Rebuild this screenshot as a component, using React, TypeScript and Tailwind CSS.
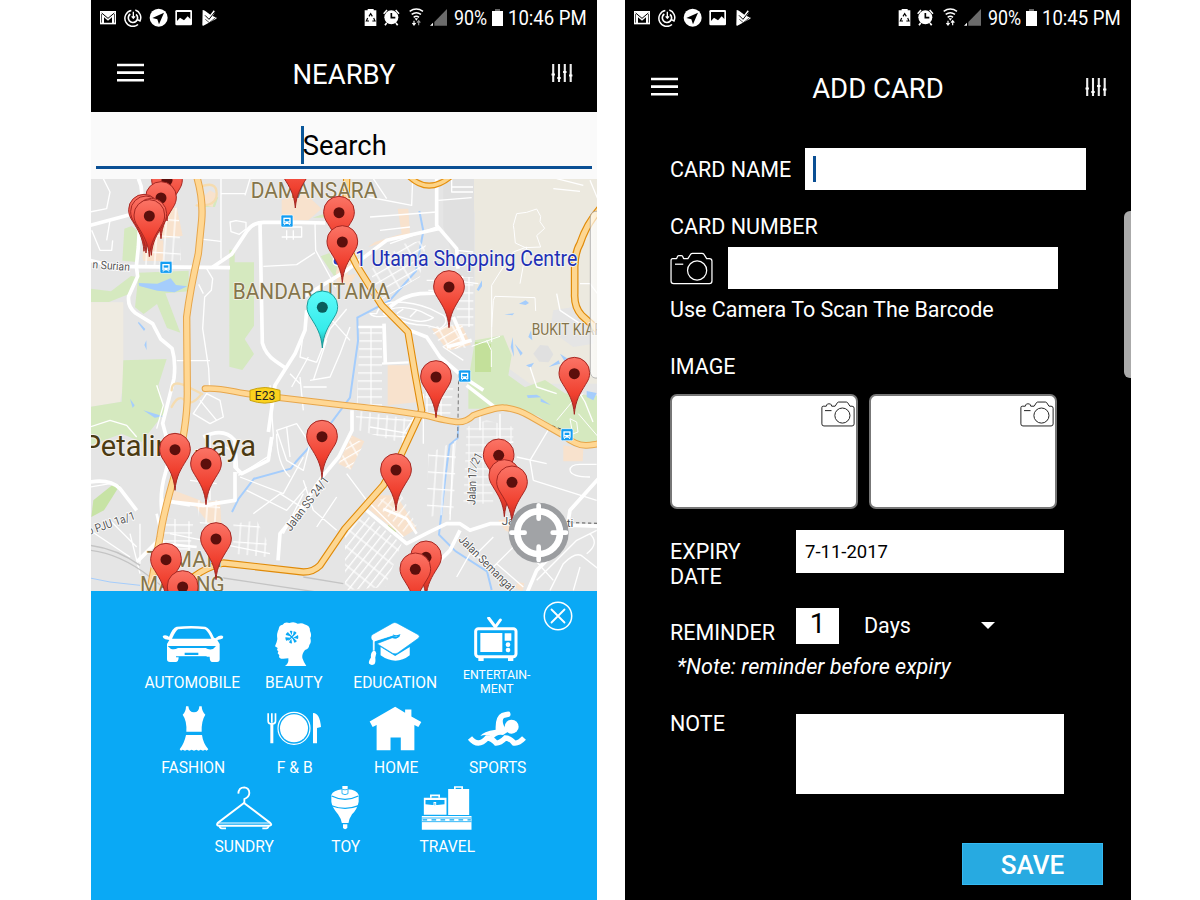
import React from "react";

/* ---------- status bar ---------- */

function NotificationIcons() {
  return (
    <svg viewBox="27 22 357 57" width="119" height="19" className="shrink-0" fill="none">
      <path d="M30 31h48v40H30z" fill="#fff" />
      <path d="M35 37l19 16 19-16" stroke="#000" strokeWidth="3" />
      <path d="M42 66V50l12 10 12-10v16z" fill="#000" />
      <path d="M34.500 40v26M73.500 40v26" stroke="#000" strokeWidth="2" />
      <path d="M124 29.500a24 24 0 1 0 20 42M136 28a24 24 0 0 1 14 33l-9-5" stroke="#fff" strokeWidth="4.500" />
      <path d="M121 40a14 14 0 1 0 17 1" stroke="#fff" strokeWidth="5" />
      <path d="M130 33v19M125 47l5 6 5-6" stroke="#fff" strokeWidth="4" />
      <circle cx="206" cy="51" r="27" fill="#fff" />
      <path d="M187 52l35-16-15 35-5-15z" fill="#000" />
      <rect x="256" y="28" width="50" height="46" rx="4" fill="#fff" />
      <path d="M261 34h40v21l-8-8-11 12-12-8-9 10z" fill="#000" />
      <path d="M338 28q4-1 16 9l7 5 10-13 5 4-8 13 12 5q0 3-4 5l-36 19q-3 1-3-3z" fill="#fff" />
      <path d="M345 44l12 12 22-28" stroke="#000" strokeWidth="3" />
      <path d="M346 56l12 10 19-15" stroke="#000" strokeWidth="2" />
    </svg>
  );
}

function SystemIcons({ syncing }: { syncing: boolean }) {
  return (
    <svg viewBox="822 20 252 60" width="84" height="20" className="shrink-0" fill="none">
      <path d="M833 26h18v4h8v47h-35V30h9z" fill="#fff" />
      <path d="M837 48l5-8 5 8M851 53l4 9h-8M837 62h-8l4-9" stroke="#000" strokeWidth="3.500" />
      <circle cx="904" cy="51" r="21" fill="#fff" />
      <path d="M881 40l10-11M927 40l-10-11" stroke="#fff" strokeWidth="4.500" />
      <path d="M890 68l-5 7M918 68l5 7" stroke="#fff" strokeWidth="5" />
      <path d="M904 38v14h12" stroke="#000" strokeWidth="5" />
      <path d="M959 33q20-14 40 0M965 42q14-10 28 0M971 51q8-6 16 0" stroke="#fff" strokeWidth="4.500" />
      <path d="M974 54h10l-5 7z" fill="#fff" />
      <path d="M972 61v10M967 68l5 6 5-6" stroke="#fff" strokeWidth="3.500" />
      <path d="M986 75V64M981 67l5-6 5 6" stroke={syncing ? "#fff" : "#999"} strokeWidth="3.500" />
      <path d="M1071 26v50h-38V65z" fill="#6b6b6b" />
      <path d="M1020 76l9-9v9z" fill="#fff" />
    </svg>
  );
}

function StatusBar({ time, syncing }: { time: string; syncing: boolean }) {
  return (
    <div className="flex h-[34px] items-center pl-[8px] text-[20.5px] leading-none text-white">
      <NotificationIcons />
      <div className="ml-[146px] flex items-center">
        <SystemIcons syncing={syncing} />
        <span className="ml-[6px] mt-[2px] w-[37.5px] origin-left scale-x-[0.87]">90%</span>
        <svg viewBox="0 0 11 17" width="11" height="17" className="shrink-0">
          <path d="M3 0h5v2H3z" fill="#666" />
          <path d="M0 2h11v15H0z" fill="#fff" />
        </svg>
        <span className="ml-[5.5px] mt-[2px] origin-left scale-x-[0.905] whitespace-nowrap">{time}</span>
      </div>
    </div>
  );
}

function TitleBar({ title }: { title: string }) {
  return (
    <div className="grid grid-cols-[60px_1fr_60px] items-center text-white">
      <svg viewBox="0 0 27 20" width="27" height="20" className="-mt-[2px] ml-[26px]">
        <path d="M0 2h27M0 9.600h27M0 17.200h27" stroke="#fff" strokeWidth="2.600" />
      </svg>
      <h1 className="mt-[2px] text-center text-[27.5px] leading-[32px]">{title}</h1>
      <svg viewBox="0 0 22 20" width="22" height="20" className="-mt-[2px] ml-[14px]">
        <path d="M2.200 1v18M8 1v18M13.800 1v18M19.700 1v18" stroke="#eee" strokeWidth="2.100" />
        <path d="M.5 11.500h3.400M6.300 15h3.400M12.100 9h3.400M18 12.500h3.400" stroke="#fff" strokeWidth="2" />
      </svg>
    </div>
  );
}

/* ---------- map ---------- */

const pins: [number, number, string?][] = [
  [231, 0],
  [616, -39],
  [213, 53],
  [162, 91],
  [168, 96],
  [184, 103],
  [178, 107],
  [747, 97],
  [757, 185],
  [1077, 320],
  [697, 381, "cyan"],
  [1453, 580],
  [1038, 590],
  [696, 769],
  [255, 808],
  [1226, 825],
  [348, 851],
  [918, 869],
  [1243, 887],
  [1266, 906],
  [378, 1076],
  [1008, 1131],
  [228, 1138],
  [976, 1167],
  [278, 1220],
];

function Pin({ x, y, cyan }: { x: number; y: number; cyan: boolean }) {
  return (
    <g transform={`translate(${x} ${y})`}>
      <path
        d="M0 122C-3 80-18 58-34 32-43 18-46 10-46-3A46 46 0 0 1 46-3C46 10 43 18 34 32 18 58 3 80 0 122z"
        fill={cyan ? "url(#pinCyan)" : "url(#pinRed)"}
        stroke={cyan ? "#1a9c9a" : "#a52722"}
        strokeWidth="3"
      />
      <circle r="16.500" fill={cyan ? "#0b5c5c" : "#5c0f0c"} />
    </g>
  );
}

function BusStop({ x, y }: { x: number; y: number }) {
  return (
    <g transform={`translate(${x} ${y})`}>
      <rect x="-18" y="-18" width="36" height="36" rx="4" fill="#139df2" stroke="#fff" strokeWidth="2" />
      <path d="M-11-10h22v19h-22z" fill="#fff" />
      <path d="M-7-6H7v7H-7z" fill="#139df2" />
      <path d="M-9 13l4-5M9 13l-4-5" stroke="#fff" strokeWidth="3" />
      <circle cx="-6" cy="5" r="1.800" fill="#139df2" />
      <circle cx="6" cy="5" r="1.800" fill="#139df2" />
    </g>
  );
}

function MapView() {
  const highway = "M322-5Q340 60 335 120L325 220Q300 330 290 410L292 640Q292 740 255 880Q220 1000 210 1070L178 1240";
  const e23 =
    "M345 625C400 620 440 640 510 645L765 675L905 690L1005 705Q1080 725 1105 725Q1130 725 1150 705Q1220 680 1240 682Q1280 685 1320 708L1420 765Q1460 797 1490 795T1530 788";
  const damansara =
    "M770-5L768 60M775 205L800 255L875 375Q900 400 954 455L975 580L995 690L930 830L880 915L765 1045L690 1155Q670 1175 640 1175L400 1148Q350 1160 310 1190L260 1240";
  const east = "M1530 85Q1490 130 1470 190Q1455 215 1454 260V340Q1452 380 1475 405L1530 455";
  return (
    <svg viewBox="3 -4 1518 1236" width="506" height="412" className="block" fontFamily="Roboto, sans-serif">
      <defs>
        <linearGradient id="pinRed" x1="0" y1="0" x2="0" y2="1">
          <stop offset="0" stopColor="#fb7466" />
          <stop offset=".65" stopColor="#f0402f" />
          <stop offset="1" stopColor="#b32a22" />
        </linearGradient>
        <linearGradient id="pinCyan" x1="0" y1="0" x2="0" y2="1">
          <stop offset="0" stopColor="#5cfbfa" />
          <stop offset=".7" stopColor="#35ebea" />
          <stop offset="1" stopColor="#1a9c9a" />
        </linearGradient>
        <linearGradient id="edge" x1="0" y1="0" x2="1" y2="0">
          <stop offset="0" stopColor="#fff" stopOpacity=".75" />
          <stop offset="1" stopColor="#fff" stopOpacity=".5" />
        </linearGradient>
        <pattern id="blocks" width="42" height="24" patternUnits="userSpaceOnUse">
          <path d="M0 2h42M3 0v24" stroke="#fff" strokeWidth="3.500" />
        </pattern>
        <pattern id="blocksTall" width="26" height="50" patternUnits="userSpaceOnUse" patternTransform="rotate(4)">
          <path d="M0 2h26M3 0v50" stroke="#fff" strokeWidth="3.500" />
        </pattern>
        <pattern id="blocksSlant" width="44" height="21" patternUnits="userSpaceOnUse" patternTransform="rotate(-52)">
          <path d="M0 2h44M3 0v21" stroke="#fff" strokeWidth="3.500" />
        </pattern>
        <pattern id="blocksTilt" width="40" height="24" patternUnits="userSpaceOnUse" patternTransform="rotate(-30)">
          <path d="M0 2h40M3 0v24" stroke="#fff" strokeWidth="3.500" />
        </pattern>
      </defs>
      <rect x="0" y="-5" width="1530" height="1245" fill="#e5e5e5" />

      {/* land use */}
      <path d="M1130-5h400V610H1320L1250 560L1240 465L1155 500V100Z" fill="#ece9df" />
      <path d="M1060-5h92v300h-40L1060 140z" fill="#e0e0e0" />
      <path d="M0 366H100V615L90 665L0 680z" fill="#efebe1" />
      <path d="M1390 390l60-10 60 50v60l-60 10-70-50z" fill="#e5e5e5" />
      <path d="M1330 520l20-26 24 2 16 26-14 24-28-2z" fill="#e0e0e0" />
      <g fill="#d5e9bf">
        <path d="M103 145l22-8 22 18-6 90-44-4z" />
        <path d="M146 277l150-6v62l-70 6 45 118-40-14-30-72-40 30-26-20z" />
        <path d="M3 325l60 8 60-46 24 4-30 50-60 24H3z" />
        <path d="M418 208h16v38h58v190l-28 40 28 45-35 48-39-10z" />
        <path d="M100 540l130-4-25 79 20 80-70 90-60-25L0 795V680l95-16z" />
        <path d="M1135 600l20-120 85-15 25 60-10 60 50 36 60-22 60 40 110 8v150l-70 0-120-90-100-22-110 0z" />
        <path d="M692 228l26-10 34 62-18 10z" />
        <path d="M340 60l45-10-10 30h-30z" />
        <path d="M668 112l30-10 10 10z" />
        <path d="M905 1020l22 18-12 20-24-18z" fill="#bfdb9c" />
        <path d="M10 960l60-48 20 2-48 76-38 20z" fill="#c7e3a5" />
        <path d="M1155 485l48 5v85h-48z" fill="#c3e09a" />
      </g>
      <g fill="#f8e2cd">
        <path d="M160 110l100-30 18 86-70 10-10 50-40 10z" />
        <path d="M160 180h60v62h-60z" />
        <path d="M575 60l60-30 60 55-40 35h-80z" />
        <path d="M1025 445l90-12 28 60-70 18z" />
        <path d="M855 185l80-25-12-75h32l5 75-60 20-65 20z" />
        <path d="M893 555h72l20 110-92 10z" />
        <path d="M785 765l38 18-40 85-38-18z" />
        <path d="M310 970l80-10 4 70-30 10z" />
        <path d="M250 930l80 30 50 60-60-40-70-20z" />
        <path d="M850 945l70 0 60 100-40 25-100-80z" />
        <path d="M765 160l30 60-28 80-30-20z" />
        <path d="M740 290l60-10-20 35h-40z" />
        <path d="M1225 1020l60-10v60l-40-20z" />
        <path d="M1420 795l60 10-2 38-58 0z" />
        <path d="M320 70l40-40 18 10-10 40z" />
        <path d="M1285 1205l18 4-6 26-22-14z" />
      </g>

      {/* water */}
      <g fill="#a5cdfc">
        <path d="M146 308l56 2 40-16 16 20 34 4-38 18-52-5-54-14z" />
        <path d="M146 424l20 22-4 6-18-24zM163 494l6-14 1 30z" />
        <path d="M1160 328l16-28v18l-10 14zM1243 402l30-3-6 6zM1287 370l20-10 10 8-10 6zM1262 500l6-30 4 60zM1274 490l24 28-6 8zM1308 555l24-8-10 16zM1315 470l8-20 4 30zM1410 520l30 20-12 10zM1376 560l30-20 4 10z" />
        <path d="M1310 645l30-2 14 8-40 2zM1352 654l30 20-30-10zM1490 632l30 6-10 22-20-10z" />
        <path d="M120 655l14 20-6 8zM160 690l60 18-26 4z" />
      </g>
      <g fill="none" stroke="#a5cdfc" strokeWidth="6">
        <path d="M988 92l12 60-22 120-80 90-96 50 2 70-24 170-60 80-100 110-18 23-110 30-46 60-20 40" />
        <path d="M1105 735l-2 38-24 20-12 90-20 180 50 50 94 60 14 56" />
        <path d="M0 1193l60 12 90 10" strokeWidth="3" />
      </g>

      {/* dense street blocks */}
      <path d="M840 270l100-80 70-10-20 110-120 70z" fill="url(#blocksTilt)" />
      <path d="M1100 290h50v150l-50 0z" fill="url(#blocks)" />
      <path d="M810 440h66v240h-76zM1000 600l90 20-10 90-70-10z" fill="url(#blocks)" />
      <path d="M795 690l190 30-40 70-140-40z" fill="url(#blocksTall)" />
      <path d="M1130 740l60-20 80 20v40l-70 30 10 160-90 0z" fill="url(#blocks)" opacity=".8" />
      <path d="M1015 820l85-40-10 220-80 10z" fill="url(#blocksTall)" />
      <path d="M765 1060l60-60 110 90-50 130-120 10z" fill="url(#blocksSlant)" />
      <path d="M850 965l80-30 50 100-30 30z" fill="url(#blocksSlant)" opacity=".8" />
      <path d="M160 120l105-40 8 160-110 20z" fill="url(#blocksTall)" />
      <path d="M220 1010l90 15-10 90-95-20z" fill="url(#blocks)" />
      <path d="M430 1030l70-10 30 60v50l-100-10z" fill="url(#blocksTall)" />
      <path d="M1015 440l100-10 30 70-80 10z" fill="url(#blocksTilt)" />
      <path d="M320 960l70 0v70l-60 0z" fill="url(#blocksTall)" />
      <path d="M745 850l40-80 38 18-42 80z" fill="url(#blocksTilt)" />

      {/* minor streets */}
      <g fill="none" stroke="#fff" strokeWidth="4" strokeLinejoin="round">
        <path d="M0 95l50-10 10-50-20-40M5 150l25 60h35l3-30M60 120l-10 60" />
        <path d="M393-5v240M393 40h75M480-5l-15 50M322 175l70 8M340 340l-14-28M350 265l18 30-4 35-20 20-6 95 18 120 3 60" />
        <path d="M420 125l18-4 30 5v20l-20 16-25-8zM575 140h60v30h-60M590 150v28M610 150v28M520 258l100-5 55-36" />
        <path d="M260 541h100M675 130l2 80 60 110M540 615l10 150-10 60-95 60" />
        <path d="M640 460l-10 70 50 16M600 580l30 30M680 546l40-100 50-60M700 390l80 90M660 600l60-10 30-70 30-80M655 530l-50 90M710 480l-40 120M630 590l10 100M640 620h70" />
        <path d="M835 50l130 25 3-80M840 110l200-15M870 150l90-10M850-5l40 60M900 190l140-50M1045 60l100-8M1085-5v40h64M1085 20h64" />
        <path d="M1100 210l50 5M1110 250h40M1085 300l80 10" />
        <path d="M860 400q10-35 60-35t100 20l40 20q20 20-10 40l-40-10q-60 0-110-30q-45 10-60-5z" />
        <path d="M880 400q20-20 60-18t70 20l20 10q-20 14-50 10t-70-20q-20 10-30-2zM920 400l20-14M960 410l20-20" />
        <path d="M1270 135l10-35 30-4 30-10 12 22-2 16 14 20-24 22 12 34-46 2-30-14-4-40zM1310 200l-40 15-40 60-25 40v170M1310 200l-20 110" strokeWidth="3" />
        <path d="M1205 440l5-80 5-12 120 4 2 40M1145 498l85-30M1190 480l14 30v50" strokeWidth="3" />
        <path d="M1400-5l80 20M1390 25l80 8M1500 0l25 60M1400 340l10 50 60 40M1470 310l30 0 30 40M1455 615l30 50 24 60M1320 560l20 60 60 20" />
        <path d="M200 745l20-70-20-60M0 740l60-20 50 15 30 35M310 700l40-60 40 20 10 50-40 20zM330 660l50 60M560 750l60-20 40 60-20 80-50-30zM560 750l30 90M590 740l10 90M640 830l-60 110-130-50M560 760q0 90 40 130M470 930l120 60 60-70M640 940l-60 120M740 950l-60 90M490 1000l80-60 80 50M640 900l30 90 70 60" />
        <path d="M390 790l50 30 4 60M360 760v200M300 900l80 10M0 920l60-10M120 1060l30 120M150 1030v120M0 1050l120 80M60 1020l80 80M240 1060l300 60" />
        <path d="M770 880l60 80 110 110M980 700l-40 60M840 740l120 20M1000 640v150M1090 790l-10 230M1330 900l190 60M1330 900l-10-60 60-100M1280 830l90 20M1440 870q0-18 30-18h50M1440 870q5 20 60 20M1150 1130l60-60M1200 1170l80-80 50-90M1220 1150l80 70M1340 1200l60-60 60-60 60-30M1380 1230l40-80q40-40 60-20l50 40M1450 1230l20-70M1100 1190l40-70 50 20M1500 1060q30 30-10 60M1300 1100l90 100" />
        <path d="M1170 690v60M1230 700v80M1200 790l70-5M1010 300h80M1015 330h70M1080 350v70M1120 540l-60-40" />
        <path d="M1440 715l20 10 4 30-16 6zM1465 700l60 70M1400 720l50-60 30-20" strokeWidth="3" />
      </g>

      {/* arterial streets */}
      <g fill="none" stroke="#fff" strokeWidth="11" strokeLinejoin="round">
        <path d="M0 135l125-33M145-5q15 30 8 60l-8 145-6 58 4 30-27 60q-4 30 20 50l52 32 24 46 34 28q12 40 6 90l-20 80-14 55 8 30 15 60-15 60q-18 60-10 120l-4 60-10 24-60 60" />
        <path d="M0 240l70 18 350 4M365 262l60-40 46-70q15-25 50-26h100l85 2" />
        <path d="M510 128l7 360q10 35 40 55l35 24M650 390l-5 60-30 70-60 95-20 140" />
        <path d="M640 350l130-80 120-90 155-35M1040-5v140l60 70 4 60" />
        <path d="M900 380q40-35 90-40l60-2M882 430l4 120M960 450l50 20 40 60 70 60 60 40M1070 500l75-20M1090 410l35 80" />
        <path d="M805 440h75M876 550l80-4M1040 300l80-10" strokeWidth="7" />
        <path d="M0 905q60-10 90 20l50 65M340 770q60-30 95 10v80l20 20 80-40 10-70M435 875v85l-95 15-90-10M220 960l80 14" />
        <path d="M786 690v60l-40 80-50 60-60 90-66 80-6 80" />
        <path d="M880 985l70 30 30 45" strokeWidth="8" />
        <path d="M830 990l120 100 70-36 50-24 40 0 30 20 60-20h100l290 10M1110 1050l-30 60-50 50-60 50M1530 890l-90 100-10 60-30 60-60 60-30 70M1130 615l90 70" />
        <path d="M220 1090l100 10M220 1090l-20-90" strokeWidth="8" />
      </g>
      <path d="M0 1110q90 10 180 80l60 46M0 1095q80 10 150 60M380 1190l400 60M640 1190l120 20" fill="none" stroke="#c4c4c4" strokeWidth="4" />
      <path d="M1106 580l-3 200" stroke="#777" strokeWidth="3" strokeDasharray="12 8" />
      <path d="M1370 730l80 30M1440 1027l90 2" stroke="#555" strokeWidth="3" strokeDasharray="10 8" fill="none" />

      {/* highways */}
      <g fill="none" strokeLinejoin="round" strokeLinecap="round">
        <path d="M330 20q50-20 50 20t-60 35M245 630q0-35 50-10t40 20q-30 40-50 20t-40 20" stroke="#f5dcb0" strokeWidth="7" />
        <path d="M955-14q60 60 130 0" stroke="#e48e0c" strokeWidth="18" />
        <path d="M955-14q60 60 130 0" stroke="#fdd386" strokeWidth="11" />
        <path d={highway} stroke="#e7a64b" strokeWidth="22" />
        <path d={highway} stroke="#ffd793" strokeWidth="16" />
        <path d={damansara} stroke="#e08a08" strokeWidth="22" />
        <path d={damansara} stroke="#fdd792" strokeWidth="15.500" />
        <path d={east} stroke="#e08a08" strokeWidth="23" />
        <path d={east} stroke="#fdd792" strokeWidth="16" />
        <path d={e23} stroke="#e7a64b" strokeWidth="20" />
        <path d={e23} stroke="#ffd793" strokeWidth="14" />
      </g>
      <path d="M480 630l22-6q25-5 44 0l24 6v30l-24 6q-22 5-44 0l-22-6z" fill="#fbd11d" stroke="#c9a20c" strokeWidth="3" />
      <text x="525" y="658" fontSize="36" textAnchor="middle" fill="#222">E23</text>

      <BusStop x={591} y={122} />
      <BusStop x={228} y={261} />
      <BusStop x={1124} y={587} />
      <BusStop x={1431} y={763} />
      <circle cx="741" cy="243" r="12" fill="#2c3fc0" stroke="#fff" strokeWidth="4" />

      {/* labels */}
      <g fill="#85754c" stroke="#f4f1ea" strokeWidth="5" paintOrder="stroke" strokeLinejoin="round">
        <text x="482" y="52" fontSize="66" textLength="380" lengthAdjust="spacingAndGlyphs">DAMANSARA</text>
        <text x="428" y="357" fontSize="66" textLength="472" lengthAdjust="spacingAndGlyphs">BANDAR UTAMA</text>
        <text x="1325" y="463" fontSize="50" textLength="240" lengthAdjust="spacingAndGlyphs">BUKIT KIARA</text>
        <text x="170" y="1160" fontSize="66" textLength="226" lengthAdjust="spacingAndGlyphs">TAMAN</text>
        <text x="150" y="1234" fontSize="64" textLength="254" lengthAdjust="spacingAndGlyphs">MAYANG</text>
        <text x="-22" y="827" fontSize="88" textLength="520" lengthAdjust="spacingAndGlyphs" fill="#4b3a12" strokeWidth="6">Petaling Jaya</text>
      </g>
      <text x="796" y="257" fontSize="68" textLength="666" lengthAdjust="spacingAndGlyphs" fill="#2130b4" stroke="#f5f5f5" strokeWidth="6" paintOrder="stroke">1 Utama Shopping Centre</text>
      <g fill="#555" stroke="#fff" strokeWidth="5" paintOrder="stroke" fontSize="35">
        <text x="7" y="264" transform="rotate(4 7 264)" textLength="112" lengthAdjust="spacingAndGlyphs">n Surian</text>
        <text x="-2" y="1064" transform="rotate(-19 -2 1064)" textLength="148" lengthAdjust="spacingAndGlyphs">ɔ PJU 1a/1</text>
        <text x="602" y="1054" transform="rotate(-53 602 1054)" textLength="194" lengthAdjust="spacingAndGlyphs">Jalan SS 24/1</text>
        <text x="1156" y="974" transform="rotate(-88 1156 974)" textLength="112" lengthAdjust="spacingAndGlyphs">Jalan 17</text>
        <text x="1157" y="864" transform="rotate(-60 1157 864)" textLength="44" lengthAdjust="spacingAndGlyphs">/21</text>
        <text x="1104" y="1080" transform="rotate(45 1104 1080)" textLength="222" lengthAdjust="spacingAndGlyphs">Jalan Semangat</text>
        <text x="1235" y="1033">Jalan</text>
        <text x="1430" y="1040">ti</text>
      </g>

      {pins.map(([x, y, tone]) => (
        <Pin key={`${x}-${y}`} x={x} y={y} cyan={tone === "cyan"} />
      ))}

      {/* locate button */}
      <g transform="translate(1346 1057)" fill="none">
        <circle r="90" fill="#9b9da0" />
        <circle r="64" fill="#a1a3a6" stroke="#fff" strokeWidth="20" />
        <path d="M0-82v40M0 82V42M-82 0h40M82 0H42" stroke="#fff" strokeWidth="14" strokeLinecap="round" />
      </g>
      <path d="M1530 93h-15q-14 3-14 20v460q0 17 14 20h15z" fill="url(#edge)" stroke="#999" strokeWidth="2" />
    </svg>
  );
}

/* ---------- category icons ---------- */

const B = "#0aa9f5";

const icons: Record<string, React.ReactNode> = {
  auto: (
    <svg viewBox="89 78 195 138" width="65" height="46" className="shrink-0" fill="#fff">
      <path d="M118 128q12-31 24-33 44-4 86 0 14 4 26 33l4 2 10-7q10-4 14 2 0 6-8 8l-10 2 7 12v46q0 8-8 8h-14q-8 0-8-16h-93q0 16-9 16h-17q-9 0-9-8v-46l7-12-12-2q-8-3-8-9 4-5 14-2l11 8z" />
      <path d="M128 131q9-20 18-28 41-5 81 0 10 8 19 28z" fill={B} />
      <path d="M115 153h145l-9 9q-12 4-22-3h-83q-12 7-22 2zM166 173h41v7h-41zM140 184h92v3h-92z" fill={B} />
    </svg>
  ),
  beauty: (
    <svg viewBox="432 78 120 138" width="40" height="46" className="shrink-0" fill="#fff">
      <path d="M449 103q0-12 12-14 6-9 20-5 14-6 25 2 14-4 20 2 18 4 17 20 6 12 1 21 4 13-3 21-1 12-13 15-10 12-8 24 4 12 12 24h-64q12-8 10-23-12 2-22 1-8-2-5-10l-5-6 2-6-4-4 2-6-8-5q6-13 7-22-3-16 4-29z" />
      <g fill={B}>
        <path d="M482 108q4-2 8 0l-2 13zM494 109q6 1 9 5l-11 9zM507 120q2 6 0 12l-14-4zM504 138q-4 5-8 5l-5-13zM489 145q-6 1-9-3l7-11zM473 138q-5-5-4-11l15 1zM470 120q1-6 7-9l8 13z" />
      </g>
      <path d="M478 116l20 20M498 116l-20 20" stroke={B} strokeWidth="4" />
    </svg>
  ),
  education: (
    <svg viewBox="55 78 160 138" width="53" height="46" className="shrink-0" fill="#fff">
      <path d="M93 156l44 27 44-27v25q-42 33-88 0z" />
      <path d="M129 84q7-4 14 0l64 35q6 5 0 11l-62 44q-8 5-16 1L82 146l46-18q14 6 22-5-10 6-20 0l-54 17v28h-7v-31q-6-4-5-11 0-6 7-9z" stroke={B} strokeWidth="2" />
      <path d="M76 142l54-17q16 6 20-5-10 4-20 0" fill="none" stroke={B} strokeWidth="3.500" />
      <path d="M70 168q8-2 10 7l-3 13q2 16-3 20-9 5-16-2-2-6 6-18-2-14 6-20z" />
    </svg>
  ),
  tv: (
    <svg viewBox="363 66 150 138" width="50" height="46" className="shrink-0" fill="none">
      <path d="M416 69l20 27 15-21" stroke="#fff" strokeWidth="9" strokeLinecap="round" />
      <rect x="377" y="101" width="121" height="84" rx="8" stroke="#fff" strokeWidth="9" />
      <path d="M391 114h66v57h-66zM464 115h20v22h-20zM385 187h16v11h-16zM474 187h16v11h-16z" fill="#fff" />
      <circle cx="474" cy="149" r="7" fill="#fff" />
      <circle cx="474" cy="165" r="7" fill="#fff" />
    </svg>
  ),
  fashion: (
    <svg viewBox="129 333 120 138" width="40" height="46" className="shrink-0" fill="#fff">
      <path d="M168 334h7q2 18 17 18t16-18h7q1 16 11 25-12 18-11 51h-46q2-33-11-51 10-9 10-25zM168 420h48q3 24 19 43l-5 4-5-3-6 3-7-3-6 3-7-3-7 3-7-3-7 3-7-3-6 3-7-3-5 3-4-4q14-18 19-43z" />
    </svg>
  ),
  food: (
    <svg viewBox="404 333 180 138" width="60" height="46" className="shrink-0" fill="none">
      <circle cx="494" cy="400" r="48" stroke="#fff" strokeWidth="3.500" />
      <circle cx="494" cy="400" r="42" fill="#fff" />
      <path d="M416.500 355v24q0 8 11 8t11-8v-24M427.500 355v28" stroke="#fff" strokeWidth="5" />
      <path d="M423 385h9v60h-9zM551 445V354q20-1 24 42l-12 3v46z" fill="#fff" />
    </svg>
  ),
  home: (
    <svg viewBox="58 333 160 138" width="53" height="46" className="shrink-0" fill="#fff">
      <path d="M137 335l30 18v-10h19v21l30 17-9 15-12-6v76h-41v-38h-31v38H81v-76l-12 6-9-17z" />
    </svg>
  ),
  sports: (
    <svg viewBox="353 333 180 138" width="60" height="46" className="shrink-0" fill="none">
      <path d="M393 423q8-14 46-19-2-40 18-50 16-6 24-4 6 10-1 15l-16 4q-7 5-1 22l12 20-14 9q-18-4-28 10-18-16-40-7z" fill="#fff" />
      <circle cx="487" cy="395" r="21" fill="#fff" />
      <path d="M362 429q12 15 25 15t26-15q13 0 27 15 14 0 28-15 14 0 26 15 14 2 30-15" stroke="#fff" strokeWidth="16" />
    </svg>
  ),
  sundry: (
    <svg viewBox="253 570 180 138" width="60" height="46" className="shrink-0" fill="none" stroke="#fff">
      <path d="M326 596q1-19 18-19 15 2 15 17 0 12-15 18v13" strokeWidth="5.500" />
      <path d="M343 624l78 59q9 9-4 9H270q-12 0-5-9z" strokeWidth="6" />
      <path d="M265 684h156" strokeWidth="3" />
      <path d="M269 691q1 9 8 9h12M418 691q-2 9-8 9h-12" strokeWidth="5" />
    </svg>
  ),
  toy: (
    <svg viewBox="586 570 120 138" width="40" height="46" className="shrink-0" fill="#fff">
      <path d="M638 573h16v10q28 2 33 17v20q-4 22-20 38-10 15-11 28h-3v13q-7 7-13 0v-13h-3q-3-16-12-28-18-22-20-38v-20q5-14 33-17z" />
      <path d="M606 603q40 20 80 0M606 632q40 16 81 0M634 686h24" fill="none" stroke={B} strokeWidth="3.500" />
      <path d="M637 582v14q9 6 18 0v-14M638 583q8 3 16 0" fill="none" stroke={B} strokeWidth="2.500" />
    </svg>
  ),
  travel: (
    <svg viewBox="206 570 170 138" width="57" height="46" className="shrink-0" fill="none">
      <path d="M223 608h68v51h-68zM296 582h63v78h-63z" fill="#fff" />
      <path d="M244 608v-7h25v7M316 582v-6h22v6" stroke="#fff" strokeWidth="5" />
      <path d="M228 615h57v13l-22 2h-14l-21-2z" fill={B} />
      <path d="M252 621h8v11h-8z" fill="#fff" />
      <path d="M256 624v7" stroke={B} strokeWidth="2" />
      <path d="M217 663h149v41H217z" fill="#fff" />
      <path d="M217 669h149M217 680h149" stroke={B} strokeWidth="2.500" />
      <path d="M219 674.500h145" stroke={B} strokeWidth="4" strokeDasharray="14 13" />
    </svg>
  ),
};

const rows: { icon: string; label: string }[][] = [
  [
    { icon: "auto", label: "AUTOMOBILE" },
    { icon: "beauty", label: "BEAUTY" },
    { icon: "education", label: "EDUCATION" },
    { icon: "tv", label: "ENTERTAIN-\nMENT" },
  ],
  [
    { icon: "fashion", label: "FASHION" },
    { icon: "food", label: "F & B" },
    { icon: "home", label: "HOME" },
    { icon: "sports", label: "SPORTS" },
  ],
  [
    { icon: "sundry", label: "SUNDRY" },
    { icon: "toy", label: "TOY" },
    { icon: "travel", label: "TRAVEL" },
  ],
];

function Category({ icon, label }: { icon: string; label: string }) {
  const twoLines = label.includes("\n");
  return (
    <button className={`flex h-[71px] w-[101.5px] flex-col items-center gap-[5px] ${twoLines ? "-mt-[4px]" : ""}`}>
      {icons[icon]}
      <span
        className={
          twoLines
            ? "whitespace-pre pl-px text-center text-[12.3px] leading-[14px]"
            : "whitespace-nowrap pl-px text-[15.6px] leading-[22px]"
        }
      >
        {label}
      </span>
    </button>
  );
}

function NearbyScreen() {
  return (
    <section className="flex h-[900px] w-[506px] flex-col overflow-hidden bg-black">
      <StatusBar time="10:46 PM" syncing={false} />
      <div className="h-[78px] pt-[23px]">
        <TitleBar title="NEARBY" />
      </div>
      <div className="flex h-[67px] flex-col bg-[#fafafa] px-[5px] pt-[13px]">
        <div className="flex h-[40px] items-center justify-center text-[27.3px] leading-none text-black">
          <span className="-mt-px h-[38px] w-[2.5px] bg-[#0a5799]" />
          <span className="-ml-[1px] mt-[3px]">Search</span>
        </div>
        <div className="mt-[1px] h-[3px] bg-[#0a4f94]" />
      </div>
      <MapView />
      <div className="relative h-[309px] bg-[#0aa9f5] pt-[30px] text-white">
        <svg viewBox="0 0 30 30" width="30" height="30" className="absolute left-[452px] top-[10px]" fill="none" stroke="#fff">
          <circle cx="15" cy="15" r="13.700" strokeWidth="1.500" />
          <path d="M8.500 8.500l13 13M21.500 8.500l-13 13" strokeWidth="1.800" strokeLinecap="round" />
        </svg>
        <div className="flex pl-[50px]">
          {rows[0].map((c) => (
            <Category key={c.label} {...c} />
          ))}
        </div>
        <div className="mt-[14px] flex pl-[51px]">
          {rows[1].map((c) => (
            <Category key={c.label} {...c} />
          ))}
        </div>
        <div className="mt-[8px] flex pl-[102px]">
          {rows[2].map((c) => (
            <Category key={c.label} {...c} />
          ))}
        </div>
      </div>
    </section>
  );
}

/* ---------- add card ---------- */

function Camera({ className }: { className: string }) {
  return (
    <svg viewBox="60 156 130 100" className={className} fill="none" stroke="currentColor" strokeWidth="3.800">
      <path d="M68 176h12l3-7q1-2 4-2h7q3 0 4 2l3 7h13l9-14q2-2 5-2h29q3 0 5 2l9 14h8q8 0 8 8v60q0 8-8 8H71q-8 0-8-8v-62q0-6 5-6z" strokeLinejoin="round" />
      <circle cx="142" cy="212" r="29" />
      <path d="M75 193h25" />
    </svg>
  );
}

function ImageSlot() {
  return (
    <button className="flex h-[115px] w-[188px] items-start justify-end rounded-[7px] border-[2.5px] border-[#777] bg-white pr-[1px] pt-[5px] text-[#222]">
      <Camera className="h-[26px] w-[34px]" />
    </button>
  );
}

function AddCardScreen() {
  return (
    <section className="relative flex h-[900px] w-[506px] flex-col overflow-hidden bg-black text-[21.5px] leading-[25px] text-white">
      <StatusBar time="10:45 PM" syncing={true} />
      <div className="h-[114px] pt-[37px]">
        <TitleBar title="ADD CARD" />
      </div>
      <form className="flex flex-col pl-[45px]">
        <div className="flex h-[42px] items-center">
          <label className="w-[135px]">CARD NAME</label>
          <div className="flex h-[42px] w-[281px] items-center bg-white pl-[8px]">
            <span className="h-[26px] w-[3px] bg-[#0a4f94]" />
          </div>
        </div>
        <label className="mt-[24px] h-[25px]">CARD NUMBER</label>
        <div className="mt-[8px] flex h-[42px] items-center">
          <Camera className="h-[33px] w-[43px]" />
          <div className="ml-[14.5px] h-[42px] w-[330.5px] bg-white" />
        </div>
        <p className="mt-[8px] h-[25px]">Use Camera To Scan The Barcode</p>
        <h2 className="mt-[32px] h-[25px]">IMAGE</h2>
        <div className="mt-[15px] flex gap-[10.5px]">
          <ImageSlot />
          <ImageSlot />
        </div>
        <div className="mt-[21px] flex h-[60px]">
          <label className="w-[126px] pt-[9px]">
            EXPIRY
            <br />
            DATE
          </label>
          <div className="flex h-[42.500px] w-[267.500px] items-center bg-white pl-[9px] pt-[3px] text-[18.5px] text-black">7-11-2017</div>
        </div>
        <div className="mt-[18px] flex h-[36px]">
          <label className="w-[126px] pt-[12px]">REMINDER</label>
          <div className="h-[35.5px] w-[43px] bg-white text-center text-[28px] leading-[31px] text-black">1</div>
          <span className="ml-[25px] w-[117px] pt-[5px]">Days</span>
          <svg viewBox="0 0 14 7" width="14" height="7" className="mt-[14px]">
            <path d="M0 0h14L7 7z" fill="#fff" />
          </svg>
        </div>
        <p className="mt-[10px] h-[25px] pl-[7px] text-[21.6px] italic">*Note: reminder before expiry</p>
        <div className="mt-[32px] flex">
          <label className="w-[126px]">NOTE</label>
          <div className="mt-[3px] h-[80px] w-[267.500px] bg-white" />
        </div>
        <button
          type="button"
          className="ml-[292px] mt-[49px] h-[42px] w-[141px] border border-[#35b9f2] bg-[#27aae1] text-[26px] font-medium leading-[42px]"
        >
          SAVE
        </button>
      </form>
      <div className="absolute right-0 top-[211px] h-[167px] w-[7px] rounded-l-[6px] bg-[#aaa]" />
    </section>
  );
}

export default function App() {
  return (
    <main className="flex h-[900px] w-[1200px] gap-[28px] overflow-hidden bg-white pl-[91px] font-[Roboto,sans-serif]">
      <NearbyScreen />
      <AddCardScreen />
    </main>
  );
}
